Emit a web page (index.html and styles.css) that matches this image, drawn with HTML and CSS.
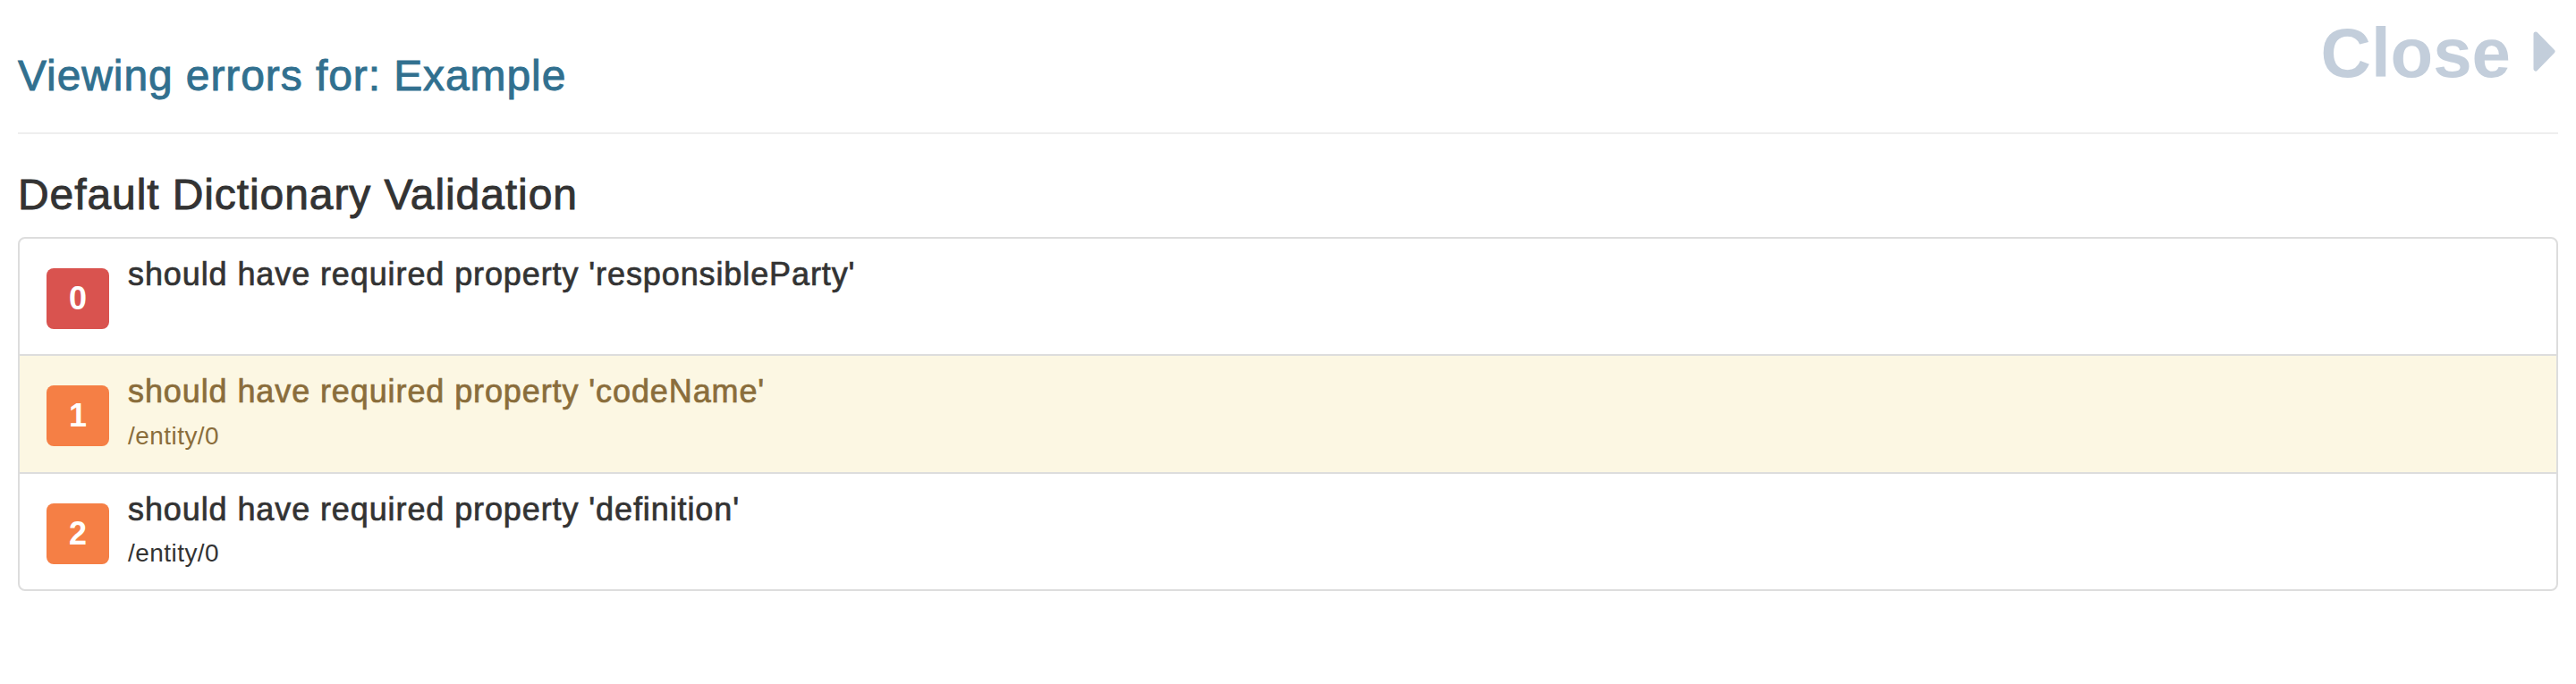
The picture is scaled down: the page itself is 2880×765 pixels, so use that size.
FILE: index.html
```html
<!DOCTYPE html>
<html lang="en">
<head>
<meta charset="utf-8">
<title>Viewing errors</title>
<link rel="stylesheet" href="styles.css">
</head>
<body>
<div class="page">
  <header class="header">
    <h3 class="title">Viewing errors for: Example</h3>
    <button class="close" type="button">
      <span class="close-label">Close</span>
      <svg class="close-caret" width="25" height="45" viewBox="0 0 25 45" aria-hidden="true">
        <path d="M3 3 L22 22.5 L3 42 Z" fill="#c3cedb" stroke="#c3cedb" stroke-width="5" stroke-linejoin="round"/>
      </svg>
    </button>
  </header>

  <h3 class="section-title">Default Dictionary Validation</h3>

  <div class="panel">
    <div class="row">
      <span class="badge badge-danger">0</span>
      <div class="row-body">
        <h4 class="row-heading">should have required property 'responsibleParty'</h4>
        <p class="row-path"></p>
      </div>
    </div>
    <div class="row row-warning">
      <span class="badge badge-orange">1</span>
      <div class="row-body">
        <h4 class="row-heading">should have required property 'codeName'</h4>
        <p class="row-path">/entity/0</p>
      </div>
    </div>
    <div class="row">
      <span class="badge badge-orange">2</span>
      <div class="row-body">
        <h4 class="row-heading">should have required property 'definition'</h4>
        <p class="row-path">/entity/0</p>
      </div>
    </div>
  </div>
</div>
</body>
</html>
```

FILE: styles.css
```css
html, body {
  margin: 0;
  padding: 0;
  background: #ffffff;
}

body {
  font-family: "Liberation Sans", Arial, Helvetica, sans-serif;
  color: #333333;
}

.page {
  padding: 0 20px;
}

.header {
  display: flex;
  justify-content: space-between;
  align-items: flex-start;
  padding-top: 20px;
  padding-bottom: 36px;
  border-bottom: 2px solid #eeeeee;
}

.title {
  margin: 39px 0 0 0;
  font-size: 48px;
  line-height: 1.1;
  font-weight: 500;
  letter-spacing: 0.019em;
  -webkit-text-stroke: 0.9px currentColor;
  color: #31708f;
}

.close {
  display: flex;
  align-items: center;
  gap: 25px;
  margin: 0 3px 0 0;
  padding: 0;
  border: 0;
  background: transparent;
  font-family: inherit;
  font-size: 78px;
  line-height: 1;
  font-weight: 700;
  color: #c3cedb;
  cursor: pointer;
}

.close-label {
  display: block;
  height: 78px;
}

.close-caret {
  display: block;
  margin-top: -3px;
}

.section-title {
  margin: 42px 0 20px 0;
  font-size: 48px;
  line-height: 1.1;
  font-weight: 500;
  letter-spacing: 0.019em;
  -webkit-text-stroke: 0.9px currentColor;
  color: #333333;
}

.panel {
  border: 2px solid #dddddd;
  border-radius: 8px;
  overflow: hidden;
  background: #ffffff;
}

.row {
  display: flex;
  align-items: flex-start;
  gap: 21px;
  padding: 20px 30px;
}

.row + .row {
  border-top: 2px solid #dddddd;
}

.row-warning {
  background: #fcf7e3;
  color: #8a6d3b;
}

.badge {
  flex: none;
  display: flex;
  align-items: center;
  justify-content: center;
  width: 70px;
  height: 68px;
  margin-top: 13px;
  border-radius: 8px;
  color: #ffffff;
  font-size: 36px;
  font-weight: 700;
  line-height: 1;
}

.badge-danger {
  background: #d9534f;
}

.badge-orange {
  background: #f57f45;
}

.row-body {
  flex: 1;
  min-width: 0;
}

.row-heading {
  margin: 0 0 10px 0;
  font-size: 36px;
  line-height: 1.1;
  font-weight: 500;
  letter-spacing: 0.025em;
  -webkit-text-stroke: 0.7px currentColor;
}

.row-path {
  margin: 0;
  min-height: 40px;
  font-size: 28px;
  line-height: 40px;
  letter-spacing: 0.016em;
}
```
